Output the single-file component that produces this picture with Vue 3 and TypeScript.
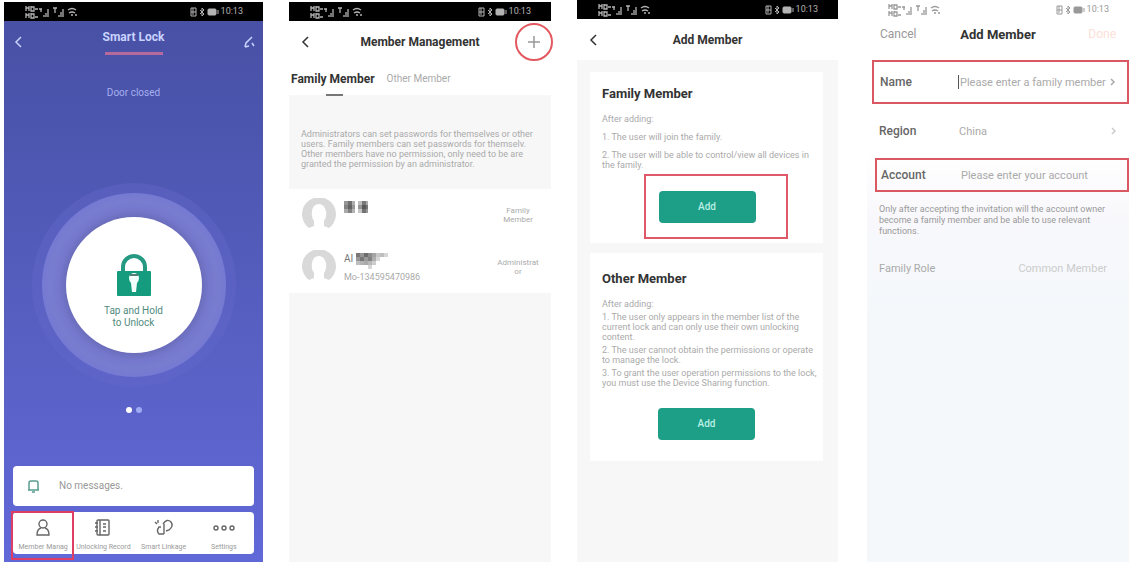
<script setup lang="ts">
interface NavItem { id: string; label: string; active?: boolean }
interface Member { id: number; detail: string; role: string[]; tiles: number[][]; prefix: string }

const nav: NavItem[] = [
  { id: 'member', label: 'Member Manag', active: true },
  { id: 'record', label: 'Unlocking Record' },
  { id: 'link', label: 'Smart Linkage' },
  { id: 'more', label: 'Settings' },
]

// tiles: x, y, width, grey level of the masked name
const members: Member[] = [
  {
    id: 1, prefix: '', detail: '', role: ['Family', 'Member'],
    tiles: [[0, 0, 4, 150], [4, 0, 4, 110], [8, 0, 3, 175], [0, 4, 4, 130], [4, 4, 4, 100], [8, 4, 3, 150], [0, 8, 4, 170], [4, 8, 4, 130], [8, 8, 3, 180],
      [14, 0, 4, 190], [18, 0, 4, 120], [22, 0, 2, 170], [14, 4, 4, 150], [18, 4, 4, 90], [22, 4, 2, 120], [14, 8, 4, 200], [18, 8, 4, 115], [22, 8, 2, 150]],
  },
  {
    id: 2, prefix: 'AI', detail: 'Mo-134595470986', role: ['Administrat', 'or'],
    tiles: [[12, 0, 4, 120], [16, 0, 4, 150], [20, 0, 4, 110], [24, 0, 4, 140], [28, 0, 4, 165], [32, 0, 4, 200], [36, 0, 4, 190], [40, 0, 4, 215], [12, 4, 4, 150], [16, 4, 4, 120], [20, 4, 4, 155], [24, 4, 4, 130], [28, 4, 4, 175], [32, 4, 4, 215], [12, 8, 4, 190], [16, 8, 4, 180], [20, 8, 4, 170], [24, 8, 4, 185], [28, 8, 4, 205], [24, 12, 4, 215]],
  },
]
const screens = ['one', 'two', 'three', 'four']
const familySteps = [['1. The user will join the family.'], ['2. The user will be able to control/view all devices in', 'the family.']]
const otherSteps = [
  ['1. The user only appears in the member list of the', 'current lock and can only use their own unlocking', 'content.'],
  ['2. The user cannot obtain the permissions or operate', 'to manage the lock.'],
  ['3. To grant the user operation permissions to the lock,', 'you must use the Device Sharing function.'],
]
const intro = [
  'Administrators can set passwords for themselves or other',
  'users. Family members can set passwords for themselv.',
  'Other members have no permission, only need to be are',
  'granted the permission by an administrator.',
]
const helper = ['Only after accepting the invitation will the account owner', 'become a family member and be able to use relevant', 'functions.']
</script>

<template>
  <main class="board">
    <section v-for="screen in screens" :key="screen" class="phone" :class="screen">
      <div class="status">
        <svg width="54" height="14" viewBox="0 0 54 14" fill="none" stroke="currentColor">
          <path d="M1 1v5M4 1v5M1 3h3M6 1v5h3V2H6M10 4h3M1 8v5M4 8v5M1 10h3M6 8v5h3V9H6M10 12h3" stroke-width="1.3" />
          <path d="M14 4h3M16 4v3M19 12v-2M21 12V8M23 12V4M28 3h4M30 3v5M34 12v-2M36 12V7M38 12V4" stroke-width="1.3" />
          <path d="M43 5q4-3 8 0M44 8q3-2 6 0M46 10h2M50 10h2" stroke-width="1.3" />
        </svg>
        <span class="right">
          <svg width="30" height="12" viewBox="0 0 30 12" fill="none" stroke="currentColor">
            <path d="M2 2h5v8H2zM2 6h5M4 2v7M11 4l4 4-2 2V2l2 2-4 4" />
            <rect x="19" y="3" width="8" height="6" rx="1" fill="currentColor" />
            <path d="M29 4v4" />
          </svg>
          <span>10:13</span>
        </span>
      </div>

      <template v-if="screen === 'one'">
        <header class="lockbar">
          <button class="icon" aria-label="Back"><svg width="10" height="14" viewBox="0 0 10 14"><path d="M7 2 2 7l5 5" /></svg></button>
          <div class="locktitle"><h1>Smart Lock</h1><i class="mark"></i></div>
          <button class="icon" aria-label="Edit"><svg width="12" height="14" viewBox="0 0 12 14"><path d="M2 12 3 8l6-6M2 12l4-1M9 8l2 3" /></svg></button>
        </header>
        <p class="door">Door closed</p>
        <button class="dial">
          <span class="ring">
            <span class="disc">
              <svg width="34" height="44" viewBox="0 0 34 44">
                <path d="M6 19v-5a11 11 0 0 1 22 0v5" fill="none" stroke="#259982" stroke-width="4" />
                <rect y="18" width="34" height="25" rx="1" fill="#159b7d" />
                <path d="M12 25a5 5 0 0 1 10 0q0 3-2 5l-1 9h-4l-1-9q-2-2-2-5z" fill="#f2fffb" />
                <path d="M13 22h8" stroke="#587c75" stroke-width="2" />
              </svg>
              <span class="hold">Tap and Hold<br />to Unlock</span>
            </span>
          </span>
        </button>
        <div class="pager"><i></i><i class="dim"></i></div>
        <div class="dock">
          <div class="message">
            <svg width="14" height="14" viewBox="0 0 14 14" fill="none" stroke="#5b9c91"><path d="M2 11V4q0-2 2-2h5q2 0 2 2v7M1 11h11M5 13h3" stroke-width="1.5" /></svg>
            <span>No messages.</span>
          </div>
          <nav class="nav">
            <button v-for="item in nav" :key="item.id" :class="{ active: item.active }">
              <svg width="24" height="20" viewBox="0 0 24 20" fill="none" stroke="#666" stroke-width="1.4">
                <template v-if="item.id === 'member'"><circle cx="12" cy="6" r="4" /><path d="M10 10q-4 1-4 7h12q0-6-4-7" /></template>
                <template v-else-if="item.id === 'record'"><rect x="6" y="2" width="12" height="15" rx="1" /><path d="M9 2v15M12 6h3M12 9h3M12 13h3M4 5h3M4 9h3M4 13h3" /></template>
                <template v-else-if="item.id === 'link'"><path d="M11 6q4-6 8-2 3 4-2 8l-3 1M12 6v5M12 16H7q-3-3 0-7h2M3 4l2 2M6 2v3M12 16v-5" /></template>
                <template v-else><circle cx="4" cy="10" r="2" /><circle cx="12" cy="10" r="2" /><circle cx="20" cy="10" r="2" /></template>
              </svg>
              <span>{{ item.label }}</span>
            </button>
          </nav>
        </div>
      </template>

      <template v-else-if="screen === 'two'">
        <header class="bar">
          <button class="icon" aria-label="Back"><svg width="10" height="14" viewBox="0 0 10 14"><path d="M7 2 2 7l5 5" /></svg></button>
          <h1>Member Management</h1>
          <button class="plus" aria-label="Add member"><svg width="14" height="14" viewBox="0 0 14 14"><path d="M7 1v12M1 7h12" /></svg></button>
        </header>
        <div class="tabs"><button class="on">Family Member</button><button>Other Member</button></div>
        <p class="intro"><span v-for="line in intro" :key="line">{{ line }}</span></p>
        <ul class="members">
          <li v-for="m in members" :key="m.id">
            <svg width="34" height="34" viewBox="0 0 34 34"><path d="M7 30A17 17 0 1 1 27 30L22 28V23Q25 19 24 13Q22 6 17 6Q11 6 10 13Q9 19 12 23V28Z" fill="#d9d9d9" /></svg>
            <div class="who">
              <svg width="48" height="16" viewBox="0 0 48 16" role="img" aria-label="Masked name">
                <text v-if="m.prefix" y="9" font-size="10" fill="#777">{{ m.prefix }}</text>
                <rect v-for="(t, i) in m.tiles" :key="i" :x="t[0]" :y="t[1]" :width="t[2]" height="4" :fill="`rgb(${t[3]},${t[3]},${t[3]})`" />
              </svg>
              <small v-if="m.detail">{{ m.detail }}</small>
            </div>
            <span class="role"><span v-for="part in m.role" :key="part">{{ part }}</span></span>
          </li>
        </ul>
      </template>

      <template v-else-if="screen === 'three'">
        <header class="bar">
          <button class="icon" aria-label="Back"><svg width="10" height="14" viewBox="0 0 10 14"><path d="M7 2 2 7l5 5" /></svg></button>
          <h1>Add Member</h1>
          <span></span>
        </header>
        <div class="cards">
          <article class="family">
            <h2>Family Member</h2>
            <p>After adding:</p>
            <p v-for="(step, i) in familySteps" :key="i"><span v-for="line in step" :key="line">{{ line }}</span></p>
            <div class="boxed"><button class="add">Add</button></div>
          </article>
          <article class="other">
            <h2>Other Member</h2>
            <p>After adding:</p>
            <p v-for="(step, i) in otherSteps" :key="i"><span v-for="line in step" :key="line">{{ line }}</span></p>
            <button class="add">Add</button>
          </article>
        </div>
      </template>

      <template v-else>
        <header class="formbar"><button>Cancel</button><h1>Add Member</h1><button class="done">Done</button></header>
        <form class="form" @submit.prevent>
          <div class="row name">
            <label for="name">Name</label>
            <i class="caret"></i><input id="name" type="text" placeholder="Please enter a family member" />
            <svg width="6" height="10" viewBox="0 0 6 10"><path d="M1 2l3 3-3 3" /></svg>
          </div>
          <div class="row region">
            <span>Region</span><button type="button">China</button>
            <svg width="6" height="10" viewBox="0 0 6 10"><path d="M1 2l3 3-3 3" /></svg>
          </div>
          <div class="row account">
            <label for="account">Account</label><input id="account" type="text" placeholder="Please enter your account" />
          </div>
        </form>
        <p class="helper"><span v-for="line in helper" :key="line">{{ line }}</span></p>
        <div class="familyrole"><span>Family Role</span><span class="value">Common Member</span></div>
      </template>
    </section>
  </main>
</template>

<style>
body { margin: 0; background: #fff; }
</style>

<style scoped>
* { box-sizing: border-box; }
.board { display: grid; grid-template-columns: 259fr 262fr 261fr 265fr; gap: 26px; min-height: 100vh; padding: 0 5px 5px 4px; font-family: Roboto, "Liberation Sans", sans-serif; line-height: 1; }
button { border: 0; padding: 0; background: none; font: inherit; color: inherit; }
h1, h2, p, ul { margin: 0; padding: 0; font-weight: 400; }
svg { display: block; flex: none; }
.phone { display: flex; flex-direction: column; min-width: 0; }
.one, .two { margin-top: 2px; }
.two, .three { background: #f7f7f7; }
.four { margin-left: 3px; background: linear-gradient(#fff 150px, #f8f8fc 220px, #f4f8fb 320px); }
.one { background: linear-gradient(#4851a5 20px, #4f58b3 180px, #5961c5 360px, #6168d8); }

.status { display: flex; justify-content: space-between; align-items: center; height: 19px; padding: 0 20px 0 21px; background: #000; color: #b4b4b4; font-size: 9px; }
.right { display: flex; align-items: center; gap: 2px; }
.four .status { background: none; color: #999; }
.icon svg path, .plus svg path, .row svg path { fill: none; stroke: currentColor; stroke-width: 1.5; }

.lockbar { display: flex; justify-content: space-between; align-items: center; height: 42px; padding: 0 8px 0 10px; color: #c9d3ff; }
.locktitle { display: flex; flex-direction: column; align-items: center; gap: 7px; }
.locktitle h1 { font-size: 12px; font-weight: 700; line-height: 16px; }
.mark { width: 58px; height: 3px; background: #b66a9c; }
.door { margin-top: 23px; text-align: center; color: #a5aff0; font-size: 10px; line-height: 14px; }
.dial { display: grid; place-items: center; align-self: center; width: 204px; height: 204px; margin-top: 83px; border-radius: 50%; background: #636acb66; }
.ring { display: grid; place-items: center; width: 184px; height: 184px; border-radius: 50%; background: radial-gradient(circle closest-side, #6b6dbb 68px, #7477cc 75px, #797dcf 84px, #7579d2 92px); }
.disc { display: flex; flex-direction: column; align-items: center; width: 136px; height: 136px; padding-top: 36px; border-radius: 50%; background: #fff; }
.hold { margin-top: 8px; color: #528b80; font-size: 10px; line-height: 12px; }
.pager { display: flex; justify-content: center; gap: 4px; margin-top: 20px; }
.pager i { width: 6px; height: 6px; border-radius: 50%; background: #fff; }
.pager .dim { background: #a0aaf4; }
.dock { display: flex; flex-direction: column; gap: 6px; margin: auto 9px 8px; }
.message { display: flex; align-items: center; gap: 18px; height: 40px; padding: 0 14px; border-radius: 4px; background: #fff; color: #999; font-size: 10px; }
.nav { display: grid; grid-template-columns: repeat(4, 1fr); height: 42px; border-radius: 4px; background: #fff; }
.nav button { position: relative; display: flex; flex-direction: column; align-items: center; gap: 6px; padding-top: 6px; color: #999; font-size: 7px; white-space: nowrap; }
.nav .active::after { content: ""; position: absolute; inset: -1px -1px -6px -2px; border: 2px solid #df3e64; }

.bar { display: grid; grid-template-columns: 34px 1fr 34px; align-items: center; justify-items: center; height: 42px; background: #fff; color: #333; }
.bar h1 { font-size: 12px; font-weight: 700; white-space: nowrap; }
.plus { display: grid; place-items: center; width: 38px; height: 38px; border: 2px solid #e25960; border-radius: 50%; color: #999; }
.tabs { display: flex; align-items: center; gap: 12px; height: 32px; padding: 0 2px; background: #fff; color: #aaa; font-size: 10px; white-space: nowrap; }
.tabs .on { position: relative; color: #333; font-size: 12px; font-weight: 700; }
.tabs .on::after { content: ""; position: absolute; left: 42%; top: 21px; width: 17px; height: 2px; background: #777; }
.intro { padding: 34px 12px 20px; color: #aaa; font-size: 9px; line-height: 10px; white-space: nowrap; }
.intro span, .cards p span, .helper span, .role span { display: block; }
.members { list-style: none; background: #fff; }
.members li { display: flex; gap: 8px; height: 52px; padding: 9px 10px 9px 13px; }
.who { display: flex; flex-direction: column; gap: 4px; flex: 1; padding-top: 3px; }
.who small { color: #aaa; font-size: 9px; }
.role { align-self: center; width: 46px; text-align: center; color: #aaa; font-size: 8px; line-height: 9px; }

.three .bar { height: 41px; }
.cards { display: flex; flex-direction: column; gap: 10px; padding: 12px 15px 0 13px; }
.cards article { display: flex; flex-direction: column; padding: 14px 12px 0; background: #fff; white-space: nowrap; }
.cards .family { padding-bottom: 4px; }
.cards .other { padding: 18px 12px 21px; }
.cards h2 { margin-bottom: 12px; color: #333; font-size: 13px; font-weight: 700; line-height: 16px; }
.cards p { margin-bottom: 8px; color: #aaa; font-size: 9px; line-height: 10px; }
.cards .family p:last-of-type { margin-bottom: 4px; }
.cards .other p { margin-bottom: 3px; }
.add { width: 97px; height: 32px; border-radius: 4px; background: #1d9e87; color: #b9efe3; font-size: 10px; font-weight: 500; }
.boxed { display: grid; align-items: center; align-self: center; width: 144px; height: 65px; margin-left: 18px; padding-left: 13px; border: 2px solid #df5968; }
.other .add { align-self: center; margin-top: 17px; }

.formbar { display: grid; grid-template-columns: 1fr auto 1fr; align-items: center; height: 30px; padding: 0 13px; color: #999; font-size: 12px; }
.formbar button { justify-self: start; }
.formbar h1 { color: #333; font-size: 13px; font-weight: 700; }
.formbar .done { justify-self: end; color: #fbe0d8; }
.form { display: flex; flex-direction: column; margin-top: 11px; }
.row { position: relative; display: grid; grid-template-columns: 80px 1fr auto; align-items: center; padding: 0 12px; color: #aaa; font-size: 11px; }
.row label, .row > span { color: #666; font-weight: 500; font-size: 12px; }
.row input { width: 100%; min-width: 0; border: 0; padding: 0; background: none; outline: 0; font: inherit; color: inherit; }
.row input::placeholder { color: #aaa; opacity: 1; }
.row button { justify-self: start; }
.name { height: 44px; margin-left: 5px; padding: 0 11px 0 6px; border: 2px solid #d95862; }
.name .caret { position: absolute; left: 84px; top: 13px; width: 1px; height: 14px; background: #555; }
.region { height: 54px; }
.region svg { color: #ccc; }
.account { height: 34px; margin-left: 8px; padding: 0 4px; border: 2px solid #d95862; }
.helper { padding: 12px 12px 0; color: #999; font-size: 9px; line-height: 11px; white-space: nowrap; }
.familyrole { display: flex; justify-content: space-between; padding: 26px 22px 0 12px; color: #aaa; font-size: 11px; }
.familyrole .value { color: #ccc; }
</style>
